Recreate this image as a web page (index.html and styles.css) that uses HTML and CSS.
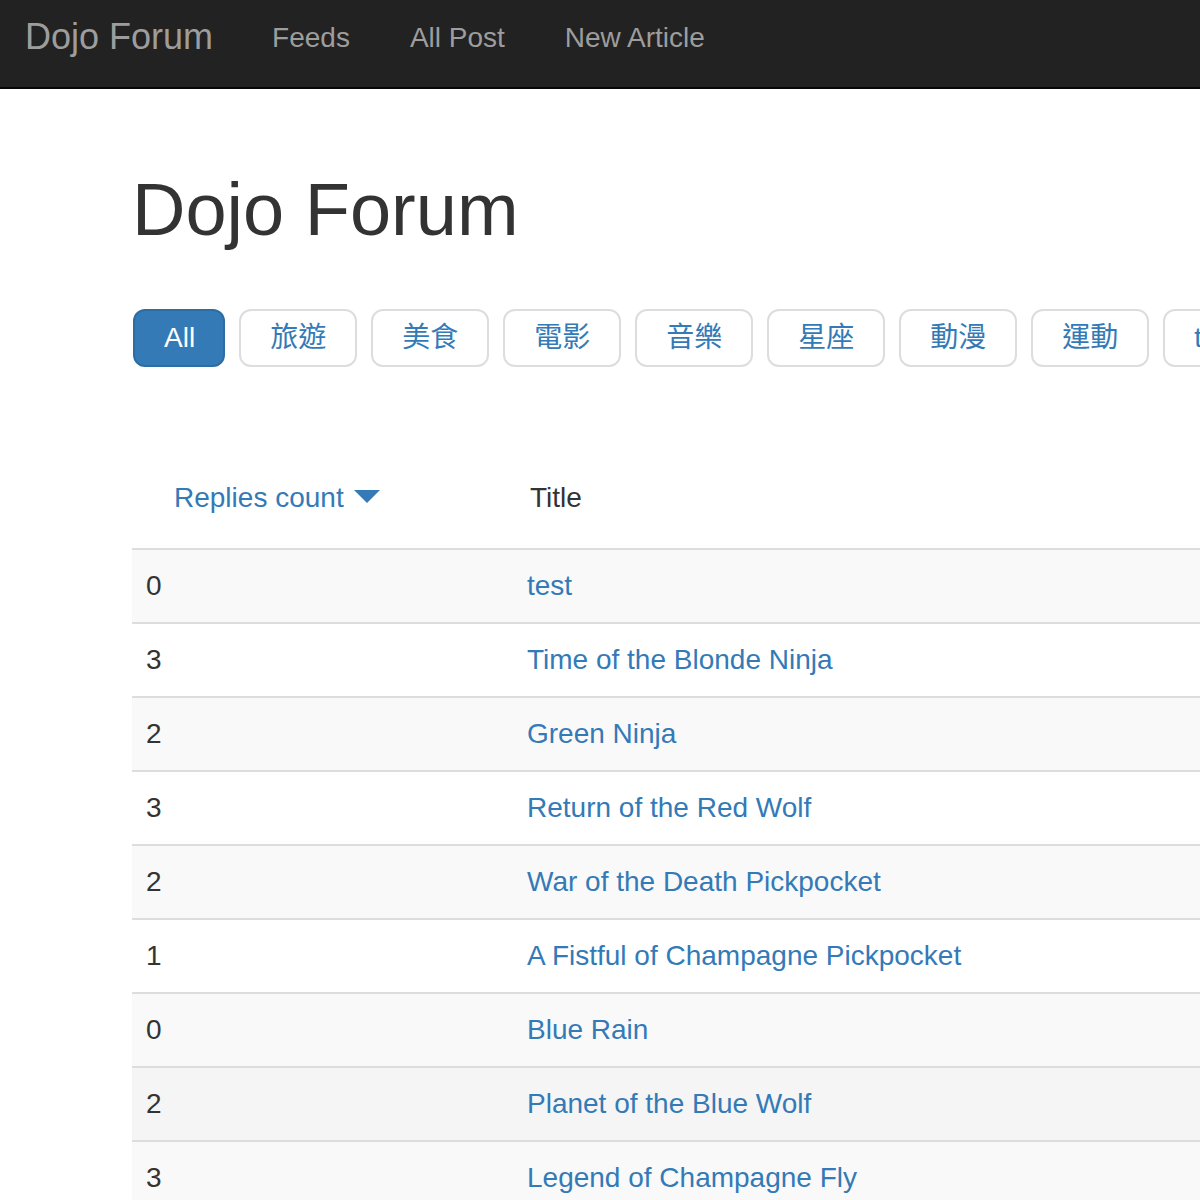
FILE: index.html
```html
<!DOCTYPE html>
<html lang="zh-Hant">
<head>
<meta charset="utf-8">
<title>Dojo Forum</title>
<link rel="stylesheet" href="styles.css">
</head>
<body>
<nav class="navbar">
  <a class="brand" href="#">Dojo Forum</a>
  <a class="nav-link" href="#">Feeds</a>
  <a class="nav-link" href="#">All Post</a>
  <a class="nav-link" href="#">New Article</a>
</nav>
<main class="container">
  <h1 class="page-title">Dojo Forum</h1>
  <div class="pills">
    <a class="pill active" href="#">All</a>
    <a class="pill" href="#">旅遊</a>
    <a class="pill" href="#">美食</a>
    <a class="pill" href="#">電影</a>
    <a class="pill" href="#">音樂</a>
    <a class="pill" href="#">星座</a>
    <a class="pill" href="#">動漫</a>
    <a class="pill" href="#">運動</a>
    <a class="pill" href="#">test</a>
  </div>
  <table class="posts">
    <thead>
      <tr>
        <th class="col-count"><a class="sort" href="#">Replies count<span class="caret"></span></a></th>
        <th class="col-title">Title</th>
      </tr>
    </thead>
    <tbody>
      <tr><td>0</td><td><a href="#">test</a></td></tr>
      <tr><td>3</td><td><a href="#">Time of the Blonde Ninja</a></td></tr>
      <tr><td>2</td><td><a href="#">Green Ninja</a></td></tr>
      <tr><td>3</td><td><a href="#">Return of the Red Wolf</a></td></tr>
      <tr><td>2</td><td><a href="#">War of the Death Pickpocket</a></td></tr>
      <tr><td>1</td><td><a href="#">A Fistful of Champagne Pickpocket</a></td></tr>
      <tr><td>0</td><td><a href="#">Blue Rain</a></td></tr>
      <tr class="hover"><td>2</td><td><a href="#">Planet of the Blue Wolf</a></td></tr>
      <tr><td>3</td><td><a href="#">Legend of Champagne Fly</a></td></tr>
    </tbody>
  </table>
</main>
</body>
</html>
```
FILE: styles.css
```css
html, body {
  margin: 0;
  padding: 0;
  overflow: hidden;
  background: #fff;
}
body {
  font-family: "Liberation Sans", "Noto Sans CJK TC", Arial, sans-serif;
  color: #333;
  font-size: 28px;
  line-height: 40px;
}
a {
  color: #337ab7;
  text-decoration: none;
}

.navbar {
  display: flex;
  align-items: flex-start;
  height: 87px;
  background: #222;
  border-bottom: 2px solid #080808;
  white-space: nowrap;
}
.brand {
  color: #9d9d9d;
  font-size: 36px;
  line-height: 40px;
  padding: 17px 29px 0 25px;
}
.nav-link {
  color: #9d9d9d;
  font-size: 28px;
  line-height: 40px;
  padding: 18px 30px 0;
}

.container {
  padding-left: 132px;
}
.page-title {
  margin: 81px 0 0;
  font-size: 74px;
  line-height: 79px;
  font-weight: 500;
  color: #333;
  white-space: nowrap;
}
.pills {
  display: flex;
  gap: 14px;
  margin-top: 60px;
  margin-left: 1px;
  white-space: nowrap;
}
.pill {
  display: block;
  flex: none;
  height: 54px;
  line-height: 54px;
  padding: 0 29px;
  border: 2px solid #ddd;
  border-radius: 12px;
  color: #337ab7;
  font-size: 28px;
  background: #fff;
}
.pill.active {
  background: #337ab7;
  border-color: #2e6da4;
  color: #fff;
  padding: 0 28px 0 29px;
}

.posts {
  margin-top: 81px;
  width: 1136px;
  border-collapse: collapse;
  border-spacing: 0;
}
.posts th {
  text-align: left;
  font-weight: normal;
  padding: 16px;
  vertical-align: middle;
  border-bottom: 2px solid #ddd;
  white-space: nowrap;
}
.col-count {
  width: 347px;
}
.posts th.col-title {
  padding-left: 19px;
}
.sort {
  display: inline-block;
  padding: 12px 24px;
  border: 2px solid transparent;
  line-height: 40px;
}
.caret {
  display: inline-block;
  width: 0;
  height: 0;
  margin-left: 10px;
  vertical-align: 4px;
  border-top: 13px solid #337ab7;
  border-left: 13px solid transparent;
  border-right: 13px solid transparent;
}
.posts td {
  padding: 16px;
  border-top: 2px solid #ddd;
  white-space: nowrap;
}
.posts td:first-child {
  padding-left: 14px;
}
.posts tbody tr:nth-child(odd) {
  background: #f9f9f9;
}
.posts tbody tr.hover {
  background: #f5f5f5;
}
```
